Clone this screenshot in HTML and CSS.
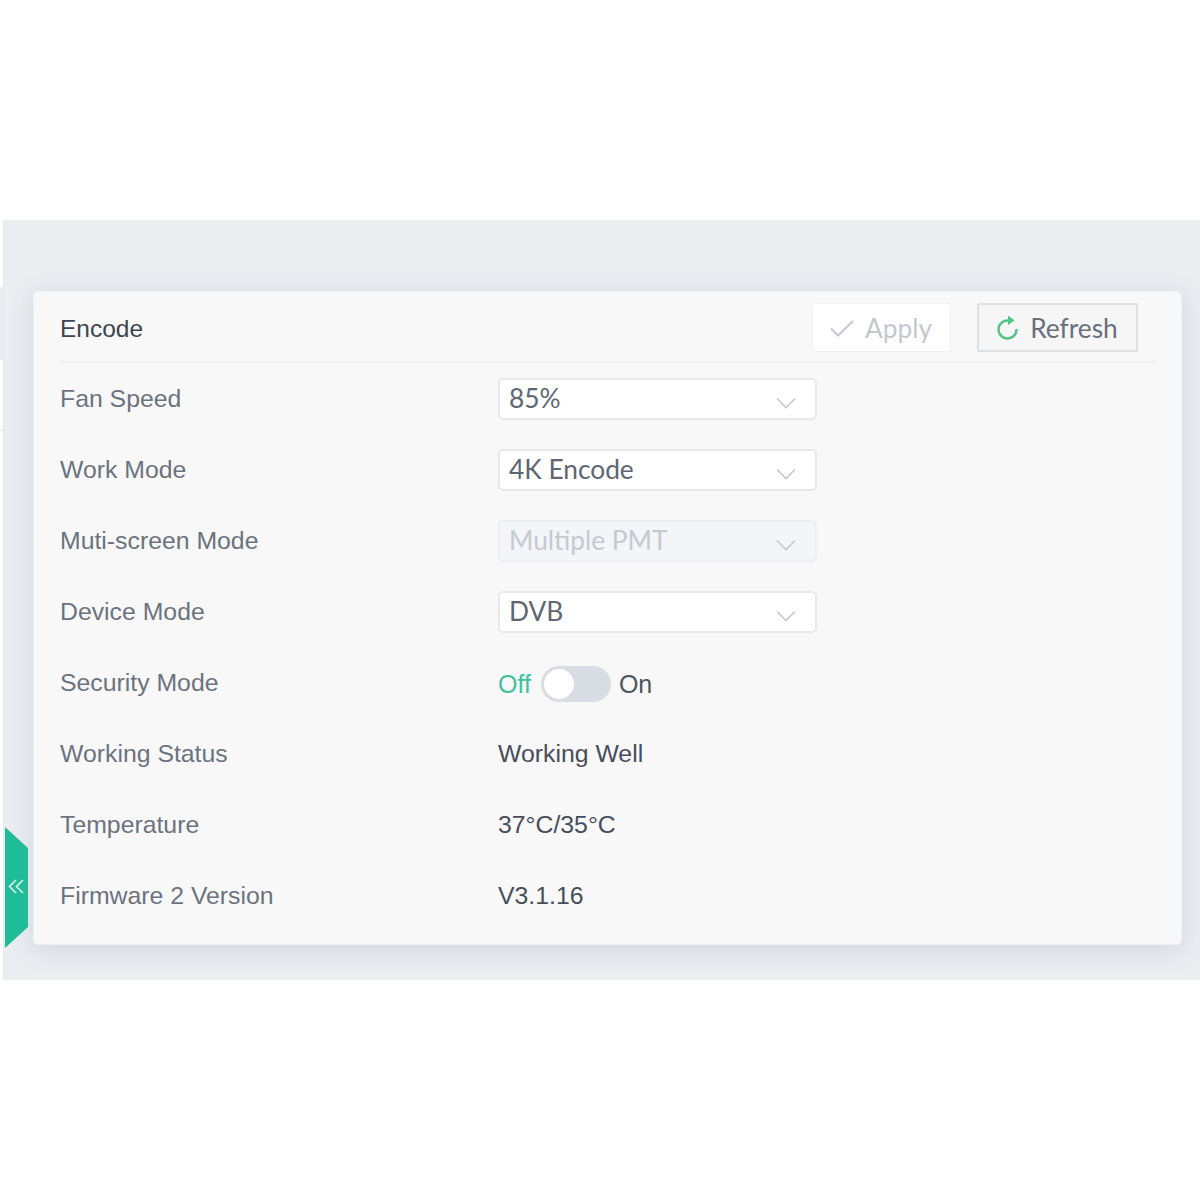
FILE: index.html
```html
<!DOCTYPE html>
<html lang="en">
<head>
<meta charset="utf-8">
<title>Encode</title>
<link rel="stylesheet" href="styles.css">
</head>
<body>
<div class="app">
  <aside class="rail">
    <div class="rail-gap"></div>
    <div class="rail-item active"></div>
    <div class="rail-item"></div>
  </aside>
  <main class="content">
    <svg class="collapse" width="24" height="122" viewBox="0 0 24 122" aria-hidden="true">
      <polygon points="0,0 23,21 23,100 0,121" fill="#1fbc97"/>
      <path d="M11 53L4.500 59.500L11 66M18 53L11.500 59.500L18 66" fill="none" stroke="#d9f3ec" stroke-width="1.600"/>
    </svg>
    <section class="card">
      <header class="card-head">
        <h2 class="title">Encode</h2>
        <div class="actions">
          <button class="btn btn-disabled" type="button">
            <svg width="26" height="20" viewBox="0 0 26 20" aria-hidden="true"><path d="M2 10.500L9 17.500L24 3" fill="none" stroke="#c5cad1" stroke-width="2.200"/></svg>
            <span>Apply</span>
          </button>
          <button class="btn btn-refresh" type="button">
            <svg width="24" height="28" viewBox="0 0 24 28" aria-hidden="true"><path d="M13.500 6.500A9 9 0 1 0 21.500 15" fill="none" stroke="#52c48a" stroke-width="2.400"/><path d="M13 1.500L19.500 6.500L13 11Z" fill="#52c48a"/></svg>
            <span>Refresh</span>
          </button>
        </div>
      </header>
      <div class="rows">
        <div class="row">
          <div class="label">Fan Speed</div>
          <div class="select"><span>85%</span><svg class="chev" width="20" height="12" viewBox="0 0 20 12" aria-hidden="true"><path d="M1 1.500L10 10.500L19 1.500"/></svg></div>
        </div>
        <div class="row">
          <div class="label">Work Mode</div>
          <div class="select"><span>4K Encode</span><svg class="chev" width="20" height="12" viewBox="0 0 20 12" aria-hidden="true"><path d="M1 1.500L10 10.500L19 1.500"/></svg></div>
        </div>
        <div class="row">
          <div class="label">Muti-screen Mode</div>
          <div class="select select-disabled"><span>Multiple PMT</span><svg class="chev" width="20" height="12" viewBox="0 0 20 12" aria-hidden="true"><path d="M1 1.500L10 10.500L19 1.500"/></svg></div>
        </div>
        <div class="row">
          <div class="label">Device Mode</div>
          <div class="select"><span>DVB</span><svg class="chev" width="20" height="12" viewBox="0 0 20 12" aria-hidden="true"><path d="M1 1.500L10 10.500L19 1.500"/></svg></div>
        </div>
        <div class="row">
          <div class="label">Security Mode</div>
          <div class="switch-wrap">
            <span class="sw-off">Off</span>
            <span class="switch"><span class="knob"></span></span>
            <span class="sw-on">On</span>
          </div>
        </div>
        <div class="row">
          <div class="label">Working Status</div>
          <div class="value">Working Well</div>
        </div>
        <div class="row">
          <div class="label">Temperature</div>
          <div class="value">37°C/35°C</div>
        </div>
        <div class="row">
          <div class="label">Firmware 2 Version</div>
          <div class="value">V3.1.16</div>
        </div>
      </div>
    </section>
  </main>
</div>
</body>
</html>
```
FILE: styles.css
```css
* { box-sizing: border-box; }
html, body { margin: 0; padding: 0; background: #fff; }
body { padding-top: 220px; font-family: "Liberation Sans", Arial, sans-serif; }
.app { display: flex; height: 760px; }
.rail { width: 4px; flex: none; display: flex; flex-direction: column; background: #fff; border-right: 1px solid #e6e9ed; }
.rail-gap { height: 67px; }
.rail-item { height: 71px; border-bottom: 1px solid #e9ecef; }
.rail-item.active { height: 73px; background: #e9edf2; }
.content { position: relative; flex: 1; background: #eaeef1; padding: 71px 18px 0 29px; }
.collapse { position: absolute; left: 1px; top: 607px; display: block; }
.card { height: 654px; background: #f8f8f8; border: 1px solid #eff1f2; border-radius: 5px; padding: 0 25px 0 26px; box-shadow: 0 5px 26px rgba(60, 80, 100, 0.15); }
.card-head { height: 71px; display: flex; align-items: center; justify-content: space-between; border-bottom: 2px solid #eeeff0; }
.title { margin: 0; font-size: 24.500px; font-weight: 400; color: #3d4550; position: relative; top: 2px; }
.actions { display: flex; gap: 26px; padding-right: 18px; padding-top: 2px; }
.btn { height: 49px; display: flex; align-items: center; gap: 10px; border-radius: 2px; font-family: Lato, sans-serif; font-size: 26.300px; padding: 0 2px 0 0; }
.btn-disabled { width: 139px; justify-content: center; background: #fff; border: 1px solid #f1f1f2; color: #c3c8cf; }
.btn-refresh { width: 161px; justify-content: center; gap: 11px; background: #f6f6f6; border: 2px solid #dfe0e2; color: #69707c; }
.rows { display: flex; flex-direction: column; padding-top: 1px; }
.row { height: 70.900px; display: flex; align-items: center; }
.label { width: 438px; flex: none; font-size: 24.800px; color: #6c737e; }
.select { width: 319px; height: 42px; display: flex; align-items: center; justify-content: space-between; padding: 0 19px 0 9px; background: #fff; border: 2px solid #e6e8ea; border-radius: 5px; font-family: Lato, sans-serif; font-size: 26.300px; color: #606671; }
.select span { position: relative; top: -1px; }
.chev { position: relative; top: 4px; }
.chev path { fill: none; stroke: #c3c8ce; stroke-width: 1.600; }
.select-disabled { background: #f3f5f8; border-color: #eceef1; color: #c5cad1; }
.switch-wrap { display: flex; align-items: center; font-size: 25px; }
.sw-off { color: #3fc1a0; margin-right: 10px; position: relative; top: 1px; }
.sw-on { color: #4e5560; margin-left: 8px; position: relative; top: 1px; }
.switch { width: 70px; height: 36px; margin-top: 2px; padding: 3px; border-radius: 18px; background: #d8dce3; display: flex; }
.knob { width: 30px; height: 30px; border-radius: 50%; background: #fff; }
.value { font-size: 24.800px; color: #474e59; }
```
